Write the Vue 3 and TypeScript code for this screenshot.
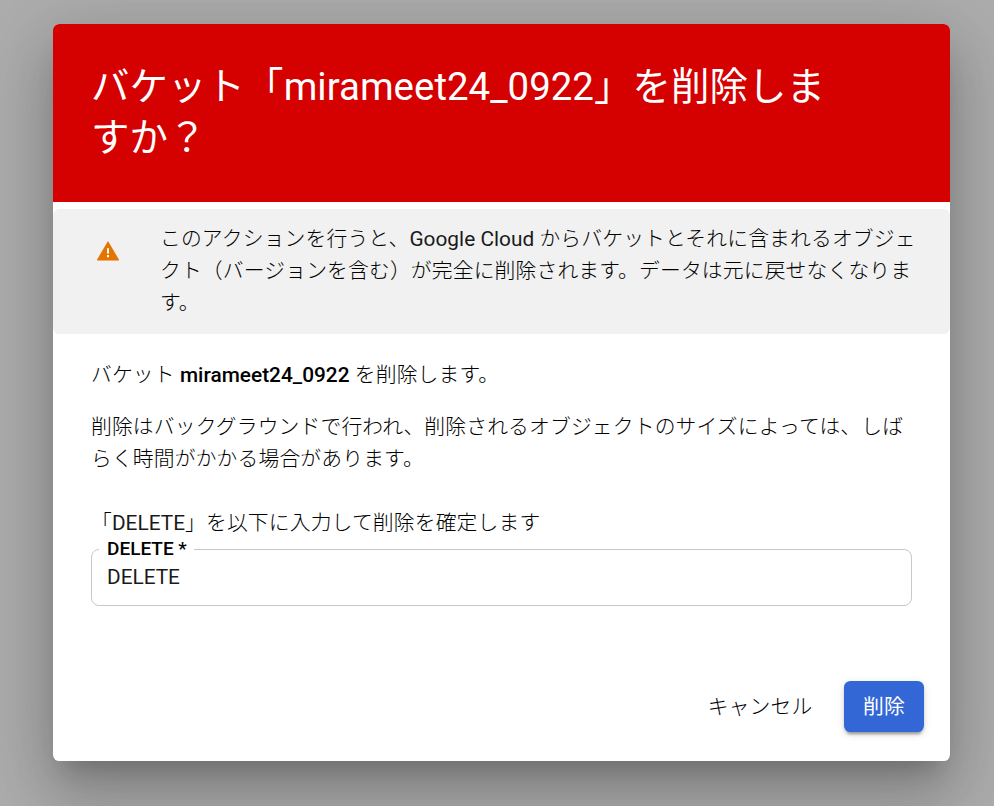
<script setup lang="ts">
import { ref } from 'vue'

const bucket = 'mirameet24_0922'
const keyword = 'DELETE'
const confirmation = ref<string>('DELETE')
</script>

<template>
  <div class="backdrop">
    <section class="dialog" role="dialog" aria-modal="true">
      <header class="header">
        <h1 class="title">バケット「<span class="latin">{{ bucket }}</span>」を削除しま<br />すか？</h1>
      </header>

      <div class="notice">
        <svg class="warning" viewBox="0 0 22 20" aria-hidden="true">
          <path d="M11 0L22.4 19.4H-0.4Z" fill="#e37400" />
          <path d="M10 7.2h2v5.2h-2zM10 14h2v2.2h-2z" fill="#fff" />
        </svg>
        <p class="notice-text">このアクションを行うと、<span class="latin">Google Cloud </span>からバケットとそれに含まれるオブジェ<br />クト（バージョンを含む）が完全に削除されます。データは元に戻せなくなりま<br />す。</p>
      </div>

      <div class="content">
        <p class="line">バケット<span class="latin">&nbsp;<b>{{ bucket }}</b>&nbsp;</span>を削除します。</p>
        <p class="line">削除はバックグラウンドで行われ、削除されるオブジェクトのサイズによっては、しば<br />らく時間がかかる場合があります。</p>
        <p class="line prompt">「<span class="latin">{{ keyword }}</span>」を以下に入力して削除を確定します</p>
        <fieldset class="field">
          <legend class="legend">{{ keyword }} *</legend>
          <input v-model="confirmation" class="input" type="text" />
        </fieldset>
      </div>

      <footer class="actions">
        <button class="button cancel" type="button">キャンセル</button>
        <button class="button confirm" type="button">削除</button>
      </footer>
    </section>
  </div>
</template>

<style>
body {
  margin: 0;
  overflow: hidden;
}
</style>

<style scoped>
.backdrop {
  box-sizing: border-box;
  height: 806px;
  padding: 24px 44px 45px 53px;
  overflow: hidden;
  background: #adadad;
  font-family: Roboto, 'Noto Sans CJK JP', sans-serif;
  font-size: 20.8px;
  font-weight: 300;
  line-height: 32px;
  letter-spacing: 0.14px;
  color: #000;
  text-spacing-trim: space-all;
}
.dialog {
  display: flex;
  flex-direction: column;
  height: 737px;
  overflow: hidden;
  border-radius: 6.4px;
  background: #fff;
  box-shadow:
    0 17.6px 24px -11px rgba(0, 0, 0, 0.2),
    0 38.4px 61px 5px rgba(0, 0, 0, 0.14),
    0 14.4px 74px 13px rgba(0, 0, 0, 0.12);
}
.header {
  box-sizing: border-box;
  height: 178px;
  padding: 37px 38px;
  background: #d50000;
  color: #fff;
}
.title {
  margin: 0;
  font-size: 38.4px;
  font-weight: 400;
  line-height: 51px;
  white-space: nowrap;
}
.latin {
  font-weight: 400;
  letter-spacing: 0.03px;
  color: #1a1a1a;
}
.title .latin {
  color: #fff;
}
.latin b {
  font-weight: 500;
  color: #000;
}
.notice {
  display: flex;
  box-sizing: border-box;
  height: 125px;
  margin-top: 7px;
  padding: 14px 0 0 44px;
  border-radius: 6.4px;
  background: #f1f1f1;
}
.warning {
  width: 22px;
  height: 20px;
  margin: 18px 41px 0 0;
}
.notice-text,
.line {
  margin: 0;
  white-space: nowrap;
}
.content {
  display: flex;
  flex-direction: column;
  padding: 25px 38px 0;
}
.line + .line {
  margin-top: 20px;
}
.line.prompt {
  margin-top: 32px;
}
.field {
  box-sizing: border-box;
  height: 67px;
  min-width: 0;
  margin: 0;
  padding: 2px 15px 0;
  border: 1px solid #c8c8c8;
  border-radius: 8px;
}
.legend {
  margin-left: -8px;
  padding: 0 7px 0 8px;
  font-size: 19px;
  font-weight: 500;
  line-height: 20px;
  letter-spacing: 0;
}
.input {
  display: block;
  width: 100%;
  height: 32px;
  padding: 0;
  border: 0;
  outline: 0;
  background: transparent;
  font: inherit;
  font-weight: 400;
  color: #1a1a1a;
}
.actions {
  display: flex;
  justify-content: flex-end;
  gap: 16px;
  margin-top: auto;
  padding: 0 26px 29px;
}
.button {
  box-sizing: border-box;
  height: 51px;
  padding: 0;
  border: 0;
  border-radius: 6.4px;
  background: transparent;
  font: inherit;
  letter-spacing: 0.14px;
  color: inherit;
}
.cancel {
  width: 136px;
}
.confirm {
  width: 80px;
  background: #3367d6;
  box-shadow:
    0 5px 2px -3px rgba(0, 0, 0, 0.2),
    0 3px 3px rgba(0, 0, 0, 0.14),
    0 2px 8px rgba(0, 0, 0, 0.12);
  color: #fff;
  font-weight: 400;
}
</style>
